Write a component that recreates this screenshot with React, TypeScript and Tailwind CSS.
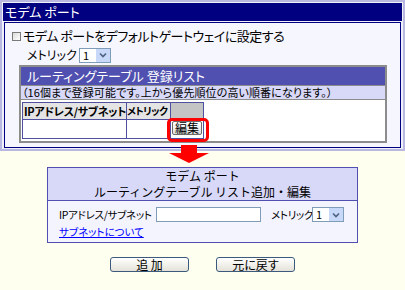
import React from "react";

function Select() {
  return (
    <div className="flex h-[15px] w-[32px] border border-[#7f9db9] bg-white">
      <span className="flex-1 pl-[3px] text-[11px] leading-[13px]">1</span>
      <span className="flex w-[14px] items-center justify-center bg-[#c8d8f8]">
        <svg width="8" height="6" viewBox="0 0 8 6">
          <path d="M1 1.5 L4 4.5 L7 1.5" fill="none" stroke="#4d6185" strokeWidth="1.6" />
        </svg>
      </span>
    </div>
  );
}

export default function App() {
  return (
    <div className="relative h-[290px] w-[405px] overflow-hidden whitespace-nowrap bg-[#fffff0] font-['Noto_Sans_CJK_JP',sans-serif] text-black [font-feature-settings:'palt']">
      {/* top panel */}
      <div className="flex h-[151px] flex-col border-2 border-[#b8b8e0] bg-[#f0f0fa] p-px">
        <div className="h-[18px] bg-[#000080] pl-[2px] text-[13px] leading-[18px] text-white">モデム ポート</div>
        <div className="mx-px mt-px flex-1 border border-[#000080] bg-[#f6f6ff]">
          <div className="mt-[4px] flex h-[18px] items-center pl-[7px]">
            <span className="h-[9px] w-[9px] border border-[#7a7a7a] bg-gradient-to-br from-[#dcdcdc] to-white" />
            <span className="ml-[2px] text-[13px] leading-[18px] tracking-[-0.5px]">モデム ポートをデフォルトゲートウェイに設定する</span>
          </div>
          <div className="mt-[2px] flex h-[16px] items-center pl-[22px]">
            <span className="w-[52px] text-[12px] leading-[16px]">メトリック</span>
            <Select />
          </div>
          <div className="ml-[14px] mt-[2px] w-[368px] border-2 border-[#8c8c8c] bg-white">
            <div className="h-[18px] bg-[#5050b0] pl-[6px] text-[13px] leading-[18px] text-white">ルーティングテーブル 登録リスト</div>
            <div className="h-[15px] border-y border-[#8c8c8c] bg-[#d8d8f8] pl-[1px] text-[11px] leading-[13px] tracking-[0.1px]">（16個まで登録可能です。上から優先順位の高い順番になります。）</div>
            <div className="px-px pb-[2px] pt-[2px]">
              <div className="w-[182px] border border-[#5050a0] text-[11px]">
                <div className="flex h-[17px] border-b border-[#5050a0] font-bold leading-[16px]">
                  <span className="w-[104px] overflow-hidden border-r border-[#5050a0] bg-[#e4e4e4] pl-px tracking-[-0.3px]">IPアドレス/サブネット</span>
                  <span className="w-[44px] overflow-hidden border-r border-[#5050a0] bg-[#e4e4e4] text-[10px] tracking-[-0.6px]">メトリック</span>
                  <span className="flex-1 bg-[#c4c4c4]" />
                </div>
                <div className="flex h-[18px]">
                  <span className="w-[104px] border-r border-[#5050a0]" />
                  <span className="w-[44px] border-r border-[#5050a0]" />
                  <span className="flex flex-1 items-start justify-center pt-px">
                    <span className="flex h-[14px] w-[30px] items-center justify-center rounded-[2px] border border-[#6b6b6b] bg-gradient-to-b from-white to-[#dedede] text-[12px] leading-[12px]">編集</span>
                  </span>
                </div>
              </div>
            </div>
          </div>
        </div>
      </div>

      {/* dialog */}
      <div className="mx-auto mt-[16px] w-[311px] border border-[#5050b0]">
        <div className="flex h-[33px] flex-col items-center justify-center border-b border-[#5050b0] bg-[#d8d8f8] text-[12px] leading-[16px] [font-feature-settings:normal]">
          <span>モデム ポート</span>
          <span>ルーティングテーブル リスト追加・編集</span>
        </div>
        <div className="bg-[#f4f4ff] pb-[3px] pl-[11px] pt-[6px] text-[10.5px]">
          <div className="flex h-[15px] items-center">
            <span className="w-[97px] leading-[15px] tracking-[-0.3px]">IPアドレス/サブネット</span>
            <span className="h-[15px] w-[105px] border border-[#7f9db9] bg-white" />
            <span className="ml-[10px] w-[41px] leading-[15px] tracking-[-0.3px]">メトリック</span>
            <Select />
          </div>
          <div className="mt-[3px] h-[14px] leading-[14px]">
            <a className="text-[#0000ff] underline">サブネットについて</a>
          </div>
        </div>
      </div>

      {/* buttons */}
      <div className="mt-[14px] flex justify-center gap-[27px]">
        <span className="flex h-[15px] w-[79px] items-center justify-center rounded-[3px] border border-[#3c5a7c] bg-gradient-to-b from-white to-[#e4e2d8] text-[12px] leading-[12px]">追 加</span>
        <span className="flex h-[15px] w-[79px] items-center justify-center rounded-[3px] border border-[#3c5a7c] bg-gradient-to-b from-white to-[#e4e2d8] text-[12px] leading-[12px]">元に戻す</span>
      </div>

      {/* highlight + arrow */}
      <div className="absolute left-[167px] top-[118px] h-[24px] w-[42px] rounded-[5px] border-[3px] border-[#ff0000]" />
      <svg className="absolute left-[166px] top-[145px]" width="46" height="20" viewBox="0 0 46 20">
        <path d="M15 0 H31 V8 H43 L23 18 L3 8 H15 Z" fill="#ff0000" />
      </svg>
    </div>
  );
}
